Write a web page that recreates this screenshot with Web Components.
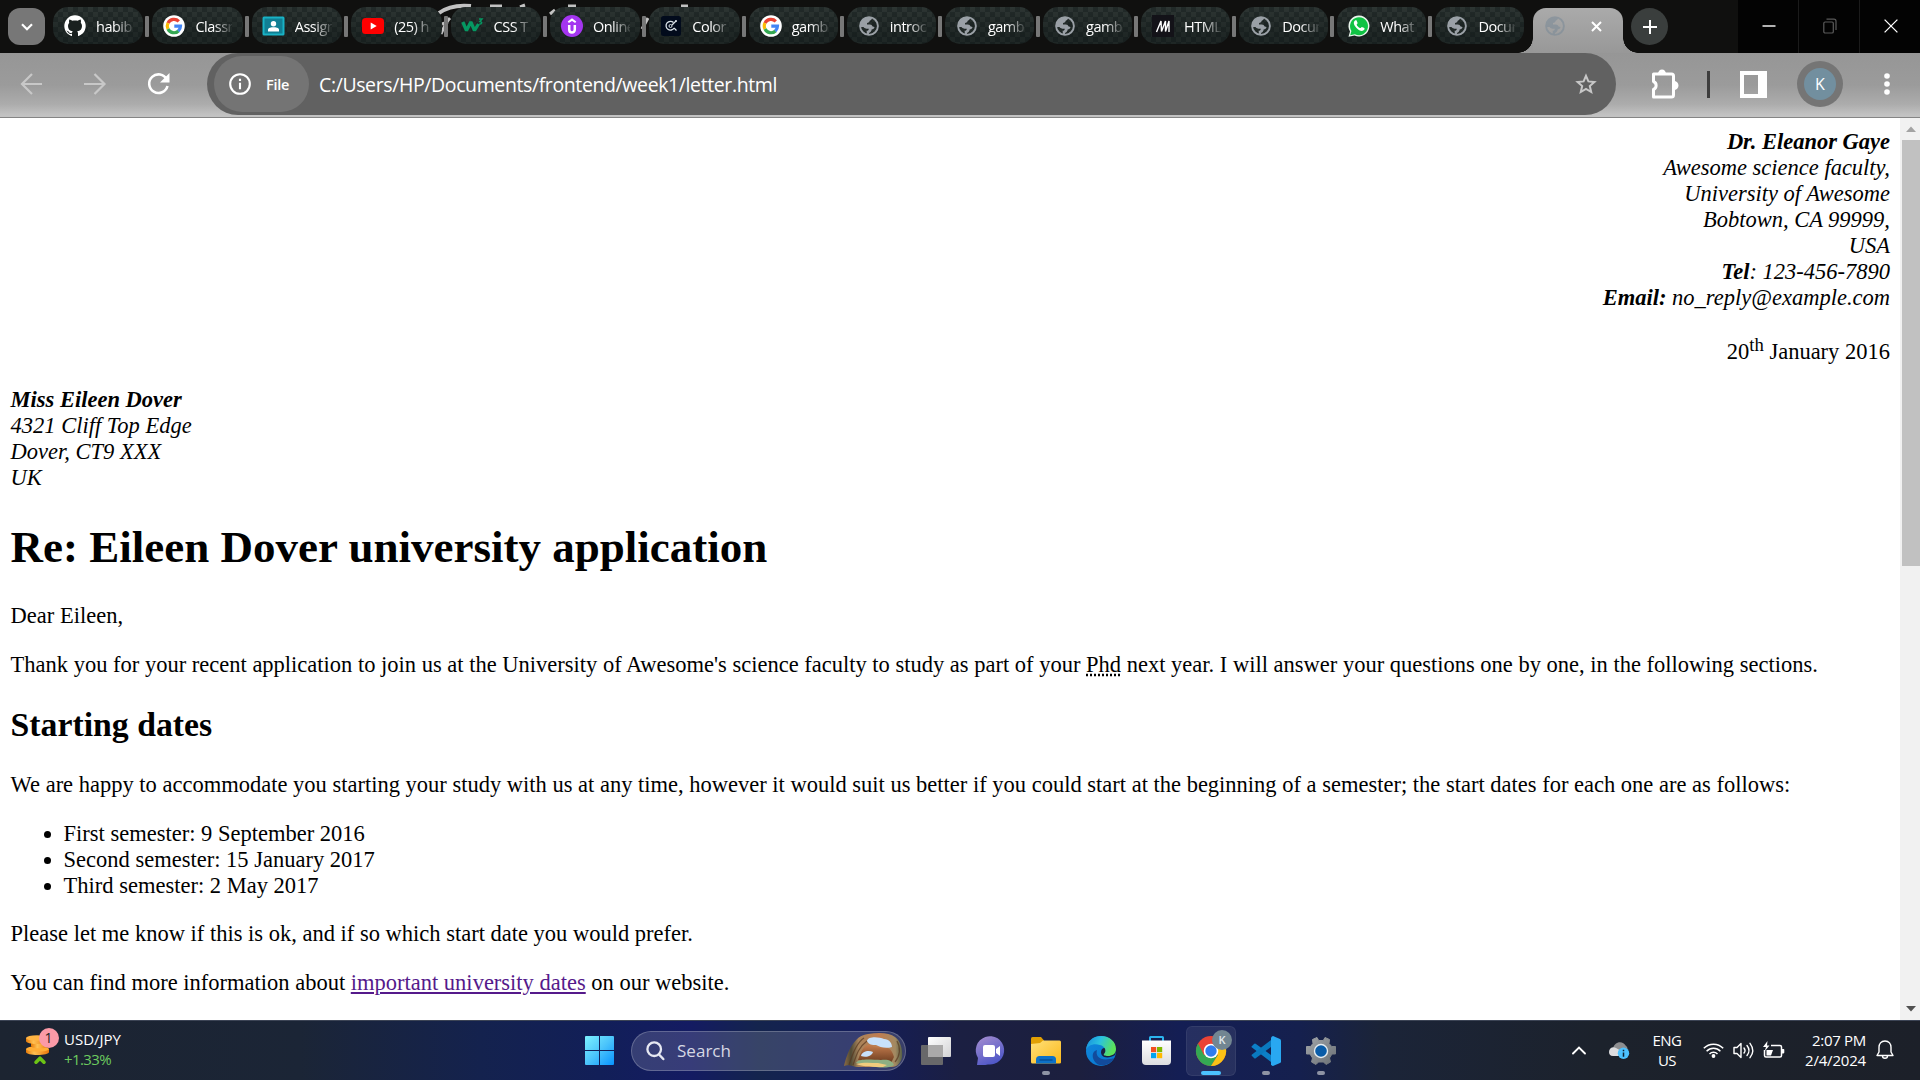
<!DOCTYPE html>
<html lang="en">
<head>
<meta charset="utf-8">
<title>letter.html</title>
<style>
html,body{margin:0;padding:0;width:1920px;height:1080px;overflow:hidden;background:#fff}
</style>
</head>
<body>
<desktop-screen></desktop-screen>
<script>
const UI = '"Open Sans","Noto Sans",sans-serif';
const globe = c => `<circle cx="11" cy="11" r="8.900" fill="none" stroke="${c}" stroke-width="1.9"/><path fill="${c}" d="M2 12C1.800 6 6 2 11 2l3 .5c.2 1.800-.8 2.800-2.300 3.200-.3 1.500-1.200 2-2.700 2.200v1.600c2.500 0 4.300-.2 5 1 .3 1 1.300 1.300 2.500 1.500-.2 1.800-1.300 2.200-2.700 2.300-.2 2-1.200 3-2.500 3.500l-.7 2-1.900-.3c0-1.900.3-2.800-.2-3.700 1.500-.1 2.300-.8 2.300-2.100C8 13.800 6 13 5.500 11.900z"/>`;
const ICONS = {
 github:[22,22,`<circle cx="11" cy="11" r="10.700" fill="#fff"/><path fill="#19201f" d="M8 22v-3.200c-3 .7-3.800-1.100-4.700-2.300l-.9-.7c1.600-.3 2.200.9 2.900 1.600.8.700 1.700.6 2.700.3.100-.7.400-1.200.8-1.500-3.200-.4-4.800-2-4.800-5.200 0-1.300.4-2.400 1.200-3.200-.3-1-.3-2 .1-3.200 1.200.1 2.200.6 3.100 1.200 1.700-.4 3.500-.4 5.200 0 .9-.6 1.900-1.100 3.100-1.200.4 1.200.4 2.200.1 3.200.8.800 1.200 1.900 1.200 3.200 0 3.200-1.600 4.800-4.800 5.200.5.500.8 1.200.8 2.300V22z"/>`],
 google:[22,22,`<circle cx="11" cy="11" r="10.800" fill="#fff"/><g fill="none" stroke-width="3.200"><path stroke="#ea4335" d="M15.800 6.300A6.700 6.700 0 0 0 5 8.100"/><path stroke="#fbbc05" d="M5 8A6.700 6.700 0 0 0 5 14"/><path stroke="#34a853" d="M5 14a6.700 6.700 0 0 0 10.500 2"/><path stroke="#4285f4" d="M15.300 16a6.700 6.700 0 0 0 2.200-4.900H11.300"/></g>`],
 classroom:[23,20,`<rect x=".5" y=".5" width="22" height="19" rx="1.500" fill="#19b2c5"/><rect x="2.500" y="2.500" width="18" height="15" fill="#117f94"/><circle cx="11.500" cy="7.700" r="2.700" fill="#fff"/><path fill="#fff" d="M6 15.500v-1.700c0-2 3.500-2.500 5.500-2.500s5.500.5 5.500 2.500v1.700z"/>`],
 youtube:[22,16,`<rect width="22" height="16" rx="3.500" fill="#f00"/><path fill="#fff" d="M8.700 4.500v7l6-3.500z"/>`],
 w3:[23,22,`<path fill="none" stroke="#059862" stroke-width="3.300" stroke-linejoin="bevel" d="M1.800 7l3.700 8.500L9.800 7l3.700 8.500L17.500 9"/><path fill="none" stroke="#059862" stroke-width="1.500" d="M18 4h3l-2 2.500c2.500 0 2 3-.7 2.500"/>`],
 udemy:[22,22,`<circle cx="11" cy="11" r="11" fill="#a435f0"/><path fill="none" stroke="#fff" stroke-width="2" d="M7.300 7.300L11 4.600l3.700 2.700"/><path fill="none" stroke="#fff" stroke-width="2.500" d="M8.200 10v4.500c0 4 5.600 4 5.600 0V10"/>`],
 color:[20,20,`<rect width="20" height="20" rx="2.500" fill="#020b1c"/><path fill="none" stroke="#dbe3e8" stroke-width="1.300" d="M12.500 6.500A4.400 4.400 0 1 0 13.200 12"/><circle cx="9.500" cy="10" r="1.500" fill="none" stroke="#dbe3e8"/><path stroke="#dbe3e8" stroke-width="1.200" d="M11 9l4-4M13 12l2.500 2.500"/><circle cx="15" cy="5" r="1" fill="#dbe3e8"/>`],
 globe:[22,22,globe('#9aa0a6')],
 ghost:[22,22,`<g opacity=".5">${globe('#758796')}</g>`],
 medium:[22,22,`<rect width="22" height="22" fill="#131218"/><path fill="none" stroke="#fff" stroke-width="1.400" stroke-linejoin="bevel" d="M4.500 17L9 6l.5 10.500L13.500 6v10.500L17 6v11"/>`],
 whatsapp:[22,22,`<path fill="#e9f5ec" d="M.5 21.800L2 16.500A10.500 10.500 0 1 1 6.500 20.500z"/><path fill="#10c344" d="M2.200 20.200l1.200-4.200a9 9 0 1 1 3.500 3.200z"/><path fill="#fff" d="M7 5.500c-2 1.500-1.300 4.500 1.500 7.400s6 4 7.700 1.900c.7-1 .3-1.700-.4-2l-1.900-.9c-1 .2-1 1.400-1.900 1.100-1.500-.5-3-2.200-3.300-3.300-.1-.8.900-.9.900-1.800L8.700 5.700c-.3-.6-1.200-.6-1.700-.2z"/>`],
 chev:[12,8,`<path fill="none" stroke="#fff" stroke-width="2.200" d="M1 1.300l5 4.900 5-4.900"/>`],
 close:[11,11,`<path stroke="#fff" stroke-width="2" d="M1 1l9 9M10 1l-9 9"/>`],
 plus:[14,14,`<path stroke="#fff" stroke-width="2" d="M7 0v14M0 7h14"/>`],
 wmin:[14,14,`<path stroke="#fff" stroke-width="1.400" d="M.5 7h13"/>`],
 wmax:[14,16,`<g fill="none" stroke="#5b5b5b" stroke-width="1.200"><rect x=".8" y="4" width="9.500" height="11" rx="1.300"/><path d="M3.500 1.200h7.500a2 2 0 0 1 2 2V12"/></g>`],
 wclose:[14,14,`<path stroke="#fff" stroke-width="1.300" d="M.6.6l12.800 12.800M13.400.6L.6 13.400"/>`],
 back:[22,22,`<path fill="none" stroke="#c8c8c8" stroke-width="2.200" d="M21 11H1.500M11 1L1 11l10 10"/>`],
 fwd:[22,22,`<path fill="none" stroke="#c8c8c8" stroke-width="2.200" d="M0 11h20M10.500 1l10 10-10 10"/>`],
 reload:[24,24,`<path fill="none" stroke="#fff" stroke-width="2.600" d="M19.800 7.500A9.300 9.300 0 1 0 20.500 14"/><path fill="#fff" d="M22.500 1v9.500h-9.500z"/>`],
 info:[22,22,`<circle cx="11" cy="11" r="9.800" fill="none" stroke="#fff" stroke-width="2.100"/><path stroke="#fff" stroke-width="2.100" d="M11 9.800v6.500M11 5.700v2.300"/>`],
 star:[22,22,`<path fill="none" stroke="#c7c7c7" stroke-width="2" d="M11 2.800l2.400 5.600 6 .6-4.600 4 1.400 6L11 15.800 5.800 19l1.400-6-4.600-4 6-.6z"/>`],
 puzzle:[30,32,`<path fill="none" stroke="#fff" stroke-width="3" stroke-linejoin="round" d="M3.500 6h18q2 0 2 2v19q0 2-2 2h-18v-7.500c3.500-1.500 3.500-6.500 0-8z"/><path fill="#fff" d="M8 6a4 4.500 0 0 1 8 0zM24 13a4.500 4.500 0 0 1 0 9z"/>`],
 panel:[27,27,`<path fill="#fff" fill-rule="evenodd" d="M0 0h27v27H0zM4 4v19h14V4z"/>`],
 dots:[6,24,`<g fill="#fff"><circle cx="3" cy="4" r="2.800"/><circle cx="3" cy="12" r="2.800"/><circle cx="3" cy="20" r="2.800"/></g>`],
 up:[10,6,`<path fill="#a3a3a3" d="M0 6h10L5 .5z"/>`],
 down:[10,6,`<path fill="#505050" d="M0 0h10L5 5.500z"/>`],
 coins:[34,42,`<defs><linearGradient id="c" x2="1"><stop stop-color="#e67a08"/><stop offset=".35" stop-color="#ffc052"/><stop offset="1" stop-color="#e8760a"/></linearGradient></defs><path fill="url(#c)" d="M0 19v3c0 4 23 4 23 0v-3z"/><ellipse cx="11.500" cy="19" rx="11.500" ry="2.800" fill="#ffad36"/><path fill="url(#c)" d="M5 12v4c0 3.200 18 3.200 18 0v-4z"/><path fill="url(#c)" d="M0 8v3c0 4 21 4 21 0V8z"/><ellipse cx="11" cy="8" rx="11" ry="2.800" fill="#ffb443"/><path fill="none" stroke="#6cc415" stroke-width="3.600" stroke-linecap="round" stroke-linejoin="round" d="M10 32.200l4-4 4 4"/>`],
 win:[29,29,`<defs><linearGradient id="w" x2="1" y2="1"><stop stop-color="#7df1ff"/><stop offset=".5" stop-color="#4cc5fb"/><stop offset="1" stop-color="#0893ff"/></linearGradient></defs><path fill="url(#w)" d="M1 0h13v14H0V1q0-1 1-1zM15 0h13q1 0 1 1v13H15zM0 15h14v14H1q-1 0-1-1zM15 15h14v13q0 1-1 1H15z"/>`],
 mag:[19,20,`<circle cx="8.200" cy="8.200" r="6.800" fill="none" stroke="#e6e8f2" stroke-width="2.300"/><path stroke="#e6e8f2" stroke-width="2.500" stroke-linecap="round" d="M13 13.500l4.300 4.500"/>`],
 arch:[58,35,`<defs><linearGradient id="a" x2="1"><stop stop-color="#8c6b43"/><stop offset=".12" stop-color="#4f4a35"/><stop offset=".25" stop-color="#a8845b"/><stop offset=".6" stop-color="#c07d50"/><stop offset=".88" stop-color="#a38a62"/><stop offset="1" stop-color="#566046"/></linearGradient><linearGradient id="b" y2="1" x2="0"><stop stop-color="#c57d4e"/><stop offset="1" stop-color="#6a3b1f"/></linearGradient></defs><path fill="url(#a)" d="M0 33C3 20 10 2 24 1c12-2 22-1 27 3 5 3 8 12 7 20-1 6-5 10-10 10H12C6 32 3 32 0 33z"/><path fill="url(#b)" d="M14 27C18 14 24 8 30 14c8 2 16-4 20 10l-3 6z"/><path fill="none" stroke="#57381f" stroke-width="1.200" opacity=".7" d="M5 32C8 22 12 10 20 5M9 32c4-12 6-18 14-24M53 8c4 7 3 15-2 21"/><path fill="#c8e1fb" d="M23 8c1-5 12-4 17-2 5 0 8 4 8 8-7 2-12 0-16-2-4 0-7 0-9-4zM17 23c1-5 8-6 12-4-1 4-7 6-12 4z"/><path fill="#8daf83" d="M12 30c3-5 16-3 25-3 7-1 12 1 13 5-4 3-12 3-18 2z"/><path fill="#f0cc7e" d="M12 31c8-2 15-1 22-1l9 2-4 2c-9 0-19 0-27-3z"/>`],
 task:[30,28,`<defs><linearGradient id="t" x2="1" y2="1"><stop stop-color="#fff"/><stop offset="1" stop-color="#d2d2d4"/></linearGradient></defs><rect x="0" y="8" width="22" height="20" rx="1" fill="#68686a"/><rect x="7" y="0" width="23" height="20" rx="1" fill="url(#t)"/><path fill="#aaa9a9" d="M7 8h15v12H7z"/>`],
 chat:[30,30,`<defs><linearGradient id="h" x2=".5" y2="1"><stop stop-color="#a88fd0"/><stop offset="1" stop-color="#5058c8"/></linearGradient></defs><path fill="url(#h)" d="M1 29l1-7A14.200 14.200 0 1 1 12 28.400c-3 1-7 .6-11 .6z"/><rect x="7" y="9" width="12" height="12" rx="2" fill="#fff"/><path fill="#fff" d="M20 13l4-3v10l-4-3z"/>`],
 folder:[30,27,`<defs><linearGradient id="f" x2="1" y2="1"><stop stop-color="#ffe07a"/><stop offset="1" stop-color="#fbb91a"/></linearGradient></defs><path fill="#e2a004" d="M0 1.500Q0 0 1.500 0H10l3 3.500V10H0z"/><path fill="url(#f)" d="M0 7l9-1 3-2.500h16.500q1.500 0 1.500 1.500v20.500q0 1-1.500 1h-27Q0 26.500 0 25z"/><path fill="#0d71c8" d="M5 26.500v-4q0-3.500 3.500-3.500h13q3.500 0 3.500 3.500v4z"/><path stroke="#054b94" stroke-width="1.300" d="M8.500 23h13"/>`],
 edge:[30,30,`<defs><linearGradient id="e" x2="1" y2=".3"><stop stop-color="#1689df"/><stop offset=".5" stop-color="#2bc2df"/><stop offset="1" stop-color="#5be25b"/></linearGradient><linearGradient id="g" x2=".8" y2="1"><stop stop-color="#1189de"/><stop offset="1" stop-color="#0877cf"/></linearGradient></defs><circle cx="15" cy="15" r="15" fill="url(#g)"/><path fill="#124b9c" d="M11 14c-2 7 4 12 17 8-4 8-14 9-18 5-5-5-4-12 1-13z"/><path fill="#1b1f40" d="M18 12c-4 1-4 7 0 9 4 1 8 0 11-2l3-10z"/><path fill="url(#e)" d="M0 14C1 5 7 0 15 0c9 0 15 6 15 13 0 5-4 7-8 7-3 0-5-1-4-2 3-3 1-8-4-9C8 7 2 9 0 14z"/>`],
 store:[29,29,`<defs><linearGradient id="s" x2="0" y2="1"><stop stop-color="#fff"/><stop offset="1" stop-color="#dcdde0"/></linearGradient></defs><path fill="none" stroke="#2bb4ee" stroke-width="2" d="M8 6V1.500q0-.5.500-.5h12q.5 0 .5.500V6"/><path fill="url(#s)" d="M0 4.500h29V25q0 4-4 4H4q-4 0-4-4z"/><path fill="#f25022" d="M9 11h5.200v5.200H9z"/><path fill="#7fba00" d="M15 11h5.200v5.200H15z"/><path fill="#00a4ef" d="M9 17h5.200v5.200H9z"/><path fill="#ffb900" d="M15 17h5.200v5.200H15z"/>`],
 chrome:[30,30,`<circle cx="15" cy="15" r="15" fill="#ea4335"/><path fill="#34a853" d="M2 7.500A15 15 0 0 0 15 30l7-11-14 0z"/><path fill="#fbc116" d="M28.500 8H15l7 11-7 11A15 15 0 0 0 28.500 8z"/><circle cx="15" cy="15" r="7.300" fill="#fff"/><circle cx="15" cy="15" r="5.700" fill="#2e7cf0"/>`],
 vscode:[30,30,`<path fill="#0c7fc7" d="M1 10l2-2q1-1 2 0l19 14v7L1 11.500q-1-.8 0-1.500z"/><path fill="#0a79bf" d="M1 20l2 2q1 1 2 0L24 8V1L1 18.500q-1 .8 0 1.500z"/><path fill="#29a8f1" d="M22 0l7 3q1 .5 1 1.500v21q0 1-1 1.500l-7 3q-1 0-2-1.500V1.500Q21 0 22 0z"/>`],
 gear:[30,30,`<defs><linearGradient id="r" x2="1" y2="1"><stop stop-color="#a1a5a9"/><stop offset="1" stop-color="#6b7075"/></linearGradient></defs><path fill="url(#r)" stroke="url(#r)" stroke-linejoin="round" d="M11 1.500l1.700 3h4.600l1.700-3 4.500 2-.5 4 2.700 3h3.800v7.500h-3.500L23.500 22l1 4L20 28.500 17.500 26h-5L10 28.500 5.500 26l1-4L4 18H.5v-7.500h4l2.500-3-.5-4z"/><circle cx="15" cy="15" r="7.200" fill="#e6edf2"/><circle cx="15" cy="15" r="5.800" fill="#0a5ca8"/>`],
 tchev:[14,9,`<path fill="none" stroke="#fff" stroke-width="1.900" stroke-linecap="round" d="M1 7.500l6-6 6 6"/>`],
 cloud:[22,18,`<path fill="#8d8e90" d="M5 8C6 0 15-1 18 5c2 1 2 5 1 7H6z"/><path fill="#dddddf" d="M1 11c0-4 4-6 7-4l9 5-7 3H5c-3 0-4-2-4-4z"/><circle cx="15.500" cy="12.300" r="5.700" fill="#4cc2ff"/><path stroke="#102030" stroke-width="1.500" d="M15.500 11.500v4.300M15.500 8.700v1.500"/>`],
 wifi:[21,16,`<g fill="none" stroke="#fff" stroke-width="1.500"><path d="M.8 6.300a13.700 13.700 0 0 1 19.400 0M3.600 9.200a9.700 9.700 0 0 1 13.800 0M6.500 12a5.700 5.700 0 0 1 8 0"/></g><circle cx="10.500" cy="14" r="1.900" fill="#fff"/>`],
 vol:[21,17,`<g fill="none" stroke="#fff" stroke-width="1.400" stroke-linecap="round" stroke-linejoin="round"><path d="M1 5.500h3l4-4v14l-4-4H1zM11 6q2 2.500 0 5M14 3.500q4 5 0 10M17 1.300q5.500 7.200 0 14.400"/></g>`],
 batt:[22,18,`<path fill="none" stroke="#fff" stroke-width="1.500" d="M8 4.500h9q1.500 0 1.500 1.500v8.500q0 1.500-1.500 1.500H3q-1.500 0-1.500-1.500V9"/><path fill="#fff" d="M3.500 9H10l-2 5.500H3.500zM18.500 8h2q.8 0 .8.800v2.800q0 .8-.8.800h-2zM4.500 0L0 6h3L1.800 10 6.500 4.500H4z"/>`],
 bell:[18,20,`<path fill="none" stroke="#fff" stroke-width="1.400" stroke-linejoin="round" d="M9 1c-4 0-6 3-6 6.300V12l-2 3.500h16L15 12V7.300C15 4 13 1 9 1zM6.500 16c0 3 5 3 5 0"/>`],
 deco:[400,53,`<g fill="none" stroke="#c2c2c2"><path stroke-width="4" d="M0 13Q12 4 32 6"/><path stroke-width="3" d="M51 6h12M81 7l5-2M111 14l5-4M129 6h8M242 6h7M2 34q5-12 9-16M3 24l6-2M203 29l6-11"/></g>`]
};
const define = (name, css, html, ready) => customElements.define(name, class extends HTMLElement {
  connectedCallback() {
    if (this.shadowRoot) return;
    const root = this.attachShadow({ mode: 'open' });
    root.innerHTML = `<style>*{box-sizing:border-box}:host{box-sizing:border-box}${css}</style>` + (typeof html === 'function' ? html(this) : html);
    if (ready) ready(this, root);
  }
});

define('ui-icon', ':host{display:block;flex:none}svg{display:block;overflow:visible}', el => {
  const [w, h, body] = ICONS[el.getAttribute('name')];
  return `<svg width="${w}" height="${h}" viewBox="0 0 ${w} ${h}">${body}</svg>`;
});

/* A single line whose tracking is adjusted so that it fills the width in "w". */
define('ui-line', ':host{display:block;white-space:nowrap;flex:none}span{display:inline-block}', '<span><slot></slot></span>', (el, root) => {
  const want = +el.getAttribute('w');
  const span = root.querySelector('span');
  const n = el.textContent.length;
  span.style.letterSpacing = (want - span.getBoundingClientRect().width) / n + 'px';
});

define('browser-tab', `:host{display:flex;align-items:center;flex:none;width:var(--w,90.4px);height:37px;border-radius:15px;padding-left:11px;margin-right:9px;
  background:linear-gradient(#3a424000 0,#0a111066 75%),repeating-conic-gradient(#2d3533 0 25%,#222a29 0 50%) 0 0/10px 10px;color:#fff;font:14.5px/37px ${UI};position:relative}
 .i{width:22px;display:flex;justify-content:center}
 .t{width:37px;margin-left:10px;padding-top:1px;overflow:hidden;white-space:nowrap;letter-spacing:-.5px;-webkit-mask:linear-gradient(90deg,#000 50%,#0002 98%);mask:linear-gradient(90deg,#000 50%,#0002 98%)}
 .s{position:absolute;right:-6px;top:9px;width:4px;height:21px;border-radius:1px;background:#777}
 :host([last]) .s{display:none}`,
 el => `<div class="i"><ui-icon name="${el.getAttribute('icon')}"></ui-icon></div><div class="t"><slot></slot></div><i class="s"></i>`);

define('active-tab', `:host{display:flex;align-items:center;width:90px;height:45px;flex:none;border-radius:13px 13px 0 0;background:linear-gradient(#aaa,#989898);padding:0 21px 9px 11px;justify-content:space-between;position:relative}
 :host::before,:host::after{content:"";position:absolute;bottom:0;width:15px;height:15px;left:-15px;background:radial-gradient(circle at 0 0,#0000 14.500px,#989898 15px)}
 :host::after{left:auto;right:-15px;background:radial-gradient(circle at 100% 0,#0000 14.500px,#989898 15px)}`,
 '<ui-icon name="ghost"></ui-icon><ui-icon name="close"></ui-icon>');

const tabs = [['github','habib'],['google','Classr'],['classroom','Assigr'],['youtube','(25) h'],['w3','CSS T'],['udemy','Online'],['color','Color'],['google','gamb'],['globe','introc'],['globe','gamb'],['globe','gamb'],['medium','HTML'],['globe','Docun'],['whatsapp','What'],['globe','Docur']];
define('tab-strip', `:host{display:flex;height:53px;background:#10100f;padding-left:8px;position:relative}
 .d{position:absolute;left:439px;top:0}
 .m{width:37px;height:37px;border-radius:12px;background:#777;margin:8px 8px 0 0;display:flex;align-items:center;justify-content:center;flex:none}
 .tabs{display:flex;margin-top:7px;position:relative}
 active-tab{margin-top:8px}
 .n{width:37px;height:37px;border-radius:50%;background:#3a3e3d;margin:8px 0 0 8px;display:flex;align-items:center;justify-content:center;flex:none}
 .w{display:flex;margin-left:auto;gap:1px;background:#1b1b1b}
 .w div{width:60px;background:#030303;display:flex;align-items:center;justify-content:center;padding:0 0 1px 1px}`,
 `<ui-icon class="d" name="deco"></ui-icon><div class="m"><ui-icon name="chev"></ui-icon></div><div class="tabs">${tabs.map((t, i) => `<browser-tab icon="${t[0]}" ${i == 14 ? 'last' : ''} style="${i > 6 ? '--w:89.1px' : ''}">${t[1]}</browser-tab>`).join('')}</div>
 <active-tab></active-tab><div class="n"><ui-icon name="plus"></ui-icon></div>
 <div class="w"><div><ui-icon name="wmin"></ui-icon></div><div><ui-icon name="wmax"></ui-icon></div><div><ui-icon name="wclose"></ui-icon></div></div>`);

define('tool-bar', `:host{display:flex;align-items:center;height:65px;padding:0 0 2px 21px;background:linear-gradient(#969696 0,#9b9b9b 50%,#acacac 80%,#c2c2c2 97%,#c2c2c2 97%);border-bottom:1px solid #858585;color:#fff;font:20px ${UI}}
 .nav{display:flex;gap:41px;align-items:center;width:186px}
 .box{display:flex;align-items:center;width:1409px;height:62px;border-radius:31px;background:#616161;padding:0 19px 0 7px}
 .chip{display:flex;align-items:center;gap:15px;width:95px;height:56px;border-radius:28px;background:#747474;padding-left:15px;font:600 14.500px ${UI};margin-right:10px}
 .box>ui-icon{margin-left:auto}
 .r{display:flex;align-items:center;flex:1;padding-left:34px}
 .sep{width:3px;height:27px;background:#3d3d3d;margin:0 30px 0 27px}
 .av{width:46px;height:46px;border-radius:50%;background:#757575;display:flex;align-items:center;justify-content:center;margin:0 41px 0 30px}
 .av div{width:32px;height:32px;border-radius:50%;background:#728f9f;font:16px/33px ${UI};text-align:center}`,
 `<div class="nav"><ui-icon name="back"></ui-icon><ui-icon name="fwd"></ui-icon><ui-icon name="reload"></ui-icon></div>
 <div class="box"><div class="chip"><ui-icon name="info"></ui-icon><ui-line w="23">File</ui-line></div><ui-line w="458" style="font-size:19.500px">C:/Users/HP/Documents/frontend/week1/letter.html</ui-line><ui-icon name="star"></ui-icon></div>
 <div class="r"><ui-icon name="puzzle"></ui-icon><div class="sep"></div><ui-icon name="panel"></ui-icon><div class="av"><div>K</div></div><ui-icon name="dots"></ui-icon></div>`);

define('letter-page', `:host{display:block;flex:1;background:#fff;color:#000;font:22.515px/26px "Liberation Serif","Times New Roman",serif;padding:11px 10px 0 10.600px;overflow:hidden}
 address,p,h1,h2,ul{margin:0}
 .from{display:block;text-align:right}
 p{margin-bottom:23px}
 .date{text-align:right;margin:28px 0 22px}
 sup{font-size:18.700px;line-height:0}
 h1{font-size:45px;line-height:52px;margin:30px 0 30px}
 h2{font-size:33.750px;line-height:38px;margin:28px 0 28px}
 ul{padding-left:53px;margin-bottom:22px}
 a{color:#551a8b;text-decoration:underline}
 abbr{text-decoration:underline dotted}`,
 `<address class="from"><b>Dr. Eleanor Gaye</b><br>Awesome science faculty,<br>University of Awesome<br>Bobtown, CA 99999,<br>USA<br><b>Tel</b>: 123-456-7890<br><b>Email:</b> no_reply@example.com</address>
 <p class="date">20<sup>th</sup> January 2016</p>
 <address><b>Miss Eileen Dover</b><br>4321 Cliff Top Edge<br>Dover, CT9 XXX<br>UK</address>
 <h1>Re: Eileen Dover university application</h1>
 <p>Dear Eileen,</p>
 <p>Thank you for your recent application to join us at the University of Awesome's science faculty to study as part of your <abbr>Phd</abbr> next year. I will answer your questions one by one, in the following sections.</p>
 <h2>Starting dates</h2>
 <p>We are happy to accommodate you starting your study with us at any time, however it would suit us better if you could start at the beginning of a semester; the start dates for each one are as follows:</p>
 <ul><li>First semester: 9 September 2016</li><li>Second semester: 15 January 2017</li><li>Third semester: 2 May 2017</li></ul>
 <p>Please let me know if this is ok, and if so which start date you would prefer.</p>
 <p>You can find more information about <a>important university dates</a> on our website.</p>`);

define('scroll-bar', `:host{display:flex;flex-direction:column;align-items:center;width:20px;background:#f1f1f1;padding:8px 0 8px 1px}
 .t{width:18px;height:426px;background:#c1c1c1;margin:8px 0 auto}`,
 '<ui-icon name="up"></ui-icon><div class="t"></div><ui-icon name="down"></ui-icon>');

define('task-item', `:host{display:flex;width:55px;height:60px;align-items:center;justify-content:center;position:relative;flex:none}
 .b{width:50px;height:50px;border-radius:6px;display:flex;align-items:center;justify-content:center}
 :host([active]) .b{background:#ffffff14;box-shadow:inset 0 0 0 1px #ffffff10}
 i{position:absolute;bottom:6px;height:4px;width:8px;border-radius:2px;background:#8e93a4;display:none}
 :host([run]) i{display:block}:host([active]) i{display:block;width:20px;background:#4cc2ff}
 ::slotted(span){position:absolute;left:28.500px;top:9px;width:20px;height:20px;border-radius:50%;background:#728692;color:#e1e9ee;font:600 11px/20px ${UI};text-align:center}`,
 el => `<div class="b"><ui-icon name="${el.getAttribute('icon')}"></ui-icon></div><slot></slot><i></i>`);

define('task-bar', `:host{display:flex;align-items:center;height:60px;border-top:1px solid #3c4455;color:#fff;font:15px/20px ${UI};
  background:linear-gradient(90deg,#1c2431 0,#1b2536 300px,#14224e 480px,#121f58 600px,#141b62 690px,#14244d 760px,#141d5a 860px,#1b1f42 960px,#1c1f3e 1080px,#141e54 1180px,#15204e 1300px,#1b2438 1380px,#1c222c 1600px,#1c2029 100%)}
 .wid{display:flex;width:572px;padding-left:26px;position:relative}
 .wid>div{margin:-1px 0 0 4px}
 .badge{position:absolute;left:38.500px;top:-2px;width:20px;height:20px;border-radius:50%;background:#fb9aa7;color:#222;font:14px/20px ${UI};text-align:center}
 .g{color:#6ccb5f}
 .s{display:flex;align-items:center;width:275px;height:40px;border-radius:20px;border:1px solid #ffffff38;background:#ffffff26;margin:0 2.500px 0 4px;padding:0 3px 0 14px;color:#d6d8e4}
 .s ui-line{font-size:17px;margin-left:12px}.s ui-icon:last-child{margin-left:auto}
 .tray{display:flex;align-items:center;margin-left:auto;padding:0 26px 1px 0}
 .l,.c{display:flex;flex-direction:column;margin-top:-1px!important}.l{align-items:center;width:48px;margin:0 12px 0 13px}
 .c{align-items:flex-end;width:72px;margin:0 10px 0 9px}`,
 `<div class="wid"><ui-icon name="coins"></ui-icon><span class="badge">1</span><div><ui-line w="57">USD/JPY</ui-line><ui-line class="g" w="47">+1.33%</ui-line></div></div>
 <task-item icon="win"></task-item>
 <div class="s"><ui-icon name="mag"></ui-icon><ui-line w="54">Search</ui-line><ui-icon name="arch"></ui-icon></div>
 <task-item icon="task"></task-item><task-item icon="chat"></task-item><task-item icon="folder" run></task-item><task-item icon="edge"></task-item><task-item icon="store"></task-item><task-item icon="chrome" active><span>K</span></task-item><task-item icon="vscode" run></task-item><task-item icon="gear" run></task-item>
 <div class="tray"><ui-icon name="tchev"></ui-icon><ui-icon name="cloud" style="margin-left:22px"></ui-icon>
 <div class="l"><ui-line w="29">ENG</ui-line><ui-line w="18">US</ui-line></div>
 <ui-icon name="wifi"></ui-icon><ui-icon name="vol" style="margin:0 9px"></ui-icon><ui-icon name="batt"></ui-icon>
 <div class="c"><ui-line w="54">2:07 PM</ui-line><ui-line w="61">2/4/2024</ui-line></div><ui-icon name="bell"></ui-icon></div>`);

define('desktop-screen', `:host{display:flex;flex-direction:column;width:1920px;height:1080px}
 .view{display:flex;height:902px}`,
 '<tab-strip></tab-strip><tool-bar></tool-bar><div class="view"><letter-page></letter-page><scroll-bar></scroll-bar></div><task-bar></task-bar>');
</script>
</body>
</html>
